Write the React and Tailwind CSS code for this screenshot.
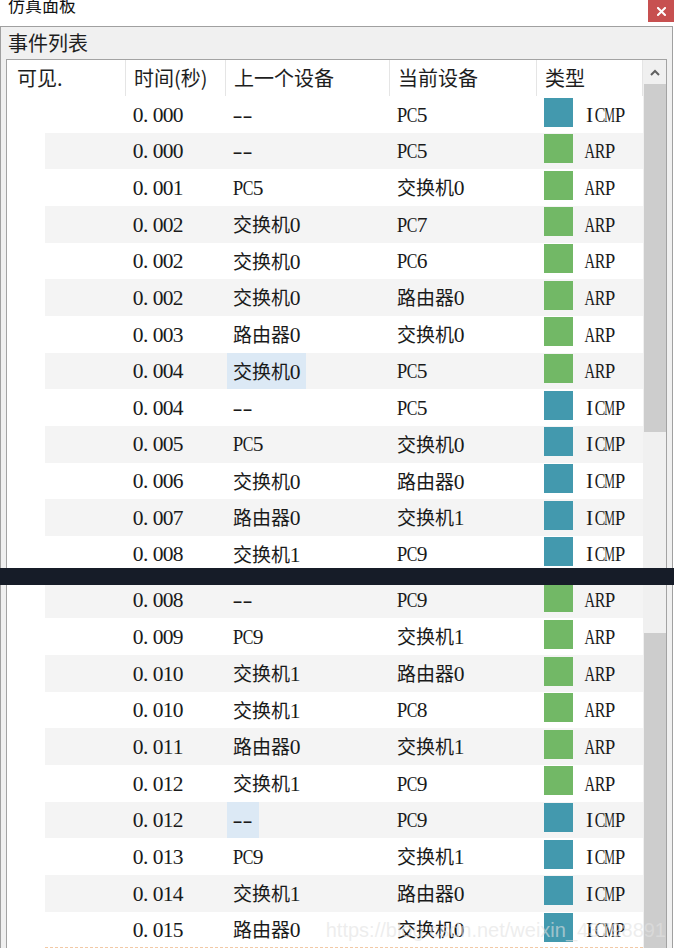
import React from "react";

const rowsA = [
  ["0.000", "--", "PC5", "ICMP"],
  ["0.000", "--", "PC5", "ARP"],
  ["0.001", "PC5", "交换机0", "ARP"],
  ["0.002", "交换机0", "PC7", "ARP"],
  ["0.002", "交换机0", "PC6", "ARP"],
  ["0.002", "交换机0", "路由器0", "ARP"],
  ["0.003", "路由器0", "交换机0", "ARP"],
  ["0.004", "交换机0", "PC5", "ARP", true],
  ["0.004", "--", "PC5", "ICMP"],
  ["0.005", "PC5", "交换机0", "ICMP"],
  ["0.006", "交换机0", "路由器0", "ICMP"],
  ["0.007", "路由器0", "交换机1", "ICMP"],
  ["0.008", "交换机1", "PC9", "ICMP"],
];

const rowsB = [
  ["0.008", "--", "PC9", "ARP"],
  ["0.009", "PC9", "交换机1", "ARP"],
  ["0.010", "交换机1", "路由器0", "ARP"],
  ["0.010", "交换机1", "PC8", "ARP"],
  ["0.011", "路由器0", "交换机1", "ARP"],
  ["0.012", "交换机1", "PC9", "ARP"],
  ["0.012", "--", "PC9", "ICMP", true],
  ["0.013", "PC9", "交换机1", "ICMP"],
  ["0.014", "交换机1", "路由器0", "ICMP"],
  ["0.015", "路由器0", "交换机0", "ICMP"],
];

const SCALE = {
  M: "scale-x-[0.56]",
  A: "scale-x-[0.68]",
  C: "scale-x-[0.74]",
  R: "scale-x-[0.74]",
  P: "scale-x-[0.88]",
  "-": "scale-x-[1.4]",
};

function Latin({ s }) {
  return (
    <span className="inline-flex whitespace-nowrap">
      {s.split("").map((c, i) => (
        <span
          key={i}
          className={`inline-flex w-[10px] ${
            c === "." ? "justify-start" : c === "I" ? "justify-start pl-[1px]" : "justify-center"
          }`}
        >
          <span
            className={`inline-block ${SCALE[c] || ""} font-['Liberation_Serif',serif] text-[21.5px] leading-none`}
          >
            {c}
          </span>
        </span>
      ))}
    </span>
  );
}

function Txt({ s }) {
  const parts = s.split(/([\u4e00-\u9fff]+)/).filter(Boolean);
  return (
    <span className="inline-flex items-baseline whitespace-nowrap leading-none">
      {parts.map((p, i) =>
        /[\u4e00-\u9fff]/.test(p) ? (
          <span key={i} className="font-['Noto_Sans_CJK_SC',sans-serif] text-[19px] leading-none">
            {p}
          </span>
        ) : (
          <Latin key={i} s={p} />
        )
      )}
    </span>
  );
}

function Row({ r, gray, last }) {
  const [t, prev, cur, type, hl] = r;
  const icmp = type === "ICMP";
  return (
    <div className="flex h-[36.67px] shrink-0 text-[#1a1a1a]">
      <div className="w-[38px] shrink-0" />
      <div
        className={`flex flex-1 ${gray ? "bg-[#f4f4f4]" : "bg-white"} ${
          last ? "border-b border-dashed border-[#f2c9a6]" : ""
        }`}
      >
        <div className="w-[81px] shrink-0" />
        <div className="w-[100px] shrink-0 pl-[7px] pt-[2px] flex items-center">
          <Txt s={t} />
        </div>
        <div className="w-[164px] shrink-0 pl-[1px] flex">
          <div className={`h-full px-[6px] pt-[2px] flex items-center ${hl ? "bg-[#dce9f5]" : ""}`}>
            <Txt s={prev} />
          </div>
        </div>
        <div className="w-[147px] shrink-0 pl-[7px] pt-[2px] flex items-center">
          <Txt s={cur} />
        </div>
        <div className="w-[106px] shrink-0 pl-[7px] flex">
          <div className="pt-[1.5px] flex items-start">
            <div className={`w-[29px] h-[29px] ${icmp ? "bg-[#4399ae]" : "bg-[#72b866]"}`} />
          </div>
          <div className="ml-[12px] pt-[2px] flex items-center">
            <Txt s={type} />
          </div>
        </div>
      </div>
    </div>
  );
}

function HeaderCell({ w, pl, children }) {
  return (
    <div
      className={`${w} ${pl} shrink-0 h-full border-r border-[#e5e5e5] flex items-center font-['Noto_Sans_CJK_SC',sans-serif] text-[20px] leading-none text-[#1e1e1e] whitespace-nowrap`}
    >
      {children}
    </div>
  );
}

export default function App() {
  return (
    <div className="relative w-[674px] h-[948px] overflow-hidden bg-white flex flex-col">
      {/* title bar */}
      <div className="h-[26px] shrink-0 flex justify-between items-start">
        <span className="ml-[8px] -mt-[6px] font-['Noto_Sans_CJK_SC',sans-serif] text-[17px] leading-[22px] text-[#111]">
          仿真面板
        </span>
        <div className="w-[26px] h-[22px] bg-[#c75050] flex items-center justify-center">
          <svg width="9" height="9" viewBox="0 0 9 9">
            <path d="M1 1L8 8M8 1L1 8" stroke="white" strokeWidth="2" strokeLinecap="square" />
          </svg>
        </div>
      </div>

      {/* section A */}
      <div className="h-[542px] w-[673px] shrink-0 flex flex-col bg-[#f0f0f0] border-t border-l border-r border-[#a0a0a0]">
        <div className="h-[32px] shrink-0 flex items-center pl-[7px] font-['Noto_Sans_CJK_SC',sans-serif] text-[20px] leading-none text-[#1e1e1e]">
          事件列表
        </div>
        <div className="flex-1 min-h-0 ml-[5px] mr-[5px] border-t border-l border-r border-[#a3a3a3] bg-white overflow-hidden flex">
          <div className="w-[636px] shrink-0 flex flex-col overflow-hidden">
            <div className="h-[36px] shrink-0 flex">
              <HeaderCell w="w-[119px]" pl="pl-[10px]">可见.</HeaderCell>
              <HeaderCell w="w-[100px]" pl="pl-[8px]">时间(秒)</HeaderCell>
              <HeaderCell w="w-[164px]" pl="pl-[8px]">上一个设备</HeaderCell>
              <HeaderCell w="w-[147px]" pl="pl-[8px]">当前设备</HeaderCell>
              <HeaderCell w="w-[106px]" pl="pl-[8px]">类型</HeaderCell>
            </div>
            {rowsA.map((r, i) => (
              <Row key={i} r={r} gray={i % 2 === 1} />
            ))}
          </div>
          <div className="w-[23px] shrink-0 flex flex-col bg-[#f0f0f0]">
            <div className="h-[24px] shrink-0 flex items-center justify-center">
              <svg width="10" height="7" viewBox="0 0 10 7">
                <path d="M1 6L5 2L9 6" fill="none" stroke="#606060" strokeWidth="2" />
              </svg>
            </div>
            <div className="h-[348px] shrink-0 ml-[1px] bg-[#cdcdcd]" />
          </div>
        </div>
      </div>

      {/* stitch band */}
      <div className="h-[17px] shrink-0 bg-[#161c28]" />

      {/* section B */}
      <div className="h-[363px] w-[673px] shrink-0 flex bg-[#f0f0f0] border-l border-r border-[#a0a0a0]">
        <div className="flex-1 ml-[5px] mr-[5px] border-l border-r border-[#a3a3a3] bg-white overflow-hidden flex">
          <div className="w-[636px] shrink-0 flex flex-col overflow-hidden">
            <div className="-mt-[3.3px] flex flex-col">
              {rowsB.map((r, i) => (
                <Row key={i} r={r} gray={i % 2 === 0} last={i === rowsB.length - 1} />
              ))}
            </div>
          </div>
          <div className="w-[23px] shrink-0 flex flex-col bg-[#f0f0f0]">
            <div className="h-[48px] shrink-0" />
            <div className="flex-1 ml-[1px] bg-[#cdcdcd]" />
          </div>
        </div>
      </div>

      {/* watermark */}
      <div className="absolute right-[8px] bottom-[8px] font-['Liberation_Sans',sans-serif] text-[20px] leading-none text-[#e2e2e2]/60 whitespace-nowrap pointer-events-none">
        https://blog.csdn.net/weixin_43798891
      </div>
    </div>
  );
}
